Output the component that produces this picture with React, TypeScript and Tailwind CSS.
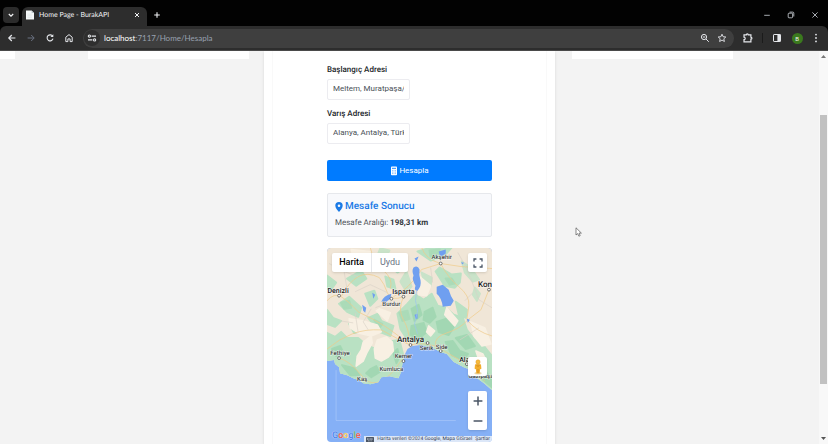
import { useState, type ReactNode } from 'react';
import { clsx } from 'clsx';

interface IconButtonProps {
  label: string;
  children: ReactNode;
  className?: string;
}

function IconButton({ label, children, className }: IconButtonProps) {
  return (
    <button
      type="button"
      aria-label={label}
      className={clsx('flex h-4 w-4 shrink-0 items-center justify-center', className)}
    >
      {children}
    </button>
  );
}

function TabStrip() {
  return (
    <div className="flex h-[26px] shrink-0 items-end bg-[#020202]">
      <IconButton label="Sekmelerde ara" className="mb-[3px] ml-[3px] rounded bg-[#2b2b2b] text-gray-100">
        <svg viewBox="0 0 8 8" className="h-2 w-2" fill="none" stroke="currentColor" strokeWidth="1.2">
          <path d="M1.8 3l2.2 2.2L6.2 3" />
        </svg>
      </IconButton>
      <div className="ml-[3px] flex h-[19px] w-[125px] items-center rounded-t-md bg-[#2d2d2d] pb-1 pr-0.5 pl-[3px]">
        <svg viewBox="0 0 10 10" className="h-2.5 w-2.5 shrink-0">
          <path d="M1 .5h5.6L9 3v6.5H1z" fill="#f4f7f8" />
          <path d="M6.6.5V3H9z" fill="#b9c4c8" />
          <path d="M2.4 4.2h4.4M2.4 5.8h4.4M2.4 7.4h4.4" stroke="#d2dadd" strokeWidth=".5" />
        </svg>
        <span className="ml-1 flex-1 font-['Lato',sans-serif] text-[7px] leading-3 whitespace-nowrap text-gray-100">
          Home Page - BurakAPI
        </span>
        <IconButton label="Sekmeyi kapat" className="text-gray-100">
          <svg viewBox="0 0 8 8" className="h-2 w-2" fill="none" stroke="currentColor" strokeWidth="1">
            <path d="M2 2l4 4M6 2L2 6" />
          </svg>
        </IconButton>
      </div>
      <IconButton label="Yeni sekme" className="mb-[3px] ml-0.5 text-gray-100">
        <svg viewBox="0 0 8 8" className="h-2 w-2" fill="none" stroke="currentColor" strokeWidth="1.1">
          <path d="M4 1.2v5.6M1.2 4h5.6" />
        </svg>
      </IconButton>
      <div className="mb-[3px] ml-auto flex gap-2 pr-[5px] text-gray-300">
        <IconButton label="Simge durumuna küçült">
          <svg viewBox="0 0 8 8" className="h-2 w-2" stroke="currentColor" strokeWidth=".8">
            <path d="M1.2 4.3h5.6" />
          </svg>
        </IconButton>
        <IconButton label="Önceki boyut">
          <svg viewBox="0 0 8 8" className="h-2 w-2" fill="none" stroke="currentColor" strokeWidth=".8">
            <rect x="1.2" y="2.2" width="4.4" height="4.6" rx=".8" />
            <path d="M2.6 1.1h3.2q1 0 1 1v3.4" />
          </svg>
        </IconButton>
        <IconButton label="Kapat">
          <svg viewBox="0 0 8 8" className="h-2 w-2" fill="none" stroke="currentColor" strokeWidth=".8">
            <path d="M1.4 1.4l5.2 5.2M6.6 1.4L1.4 6.6" />
          </svg>
        </IconButton>
      </div>
    </div>
  );
}

function Toolbar() {
  const [path, setPath] = useState(':7117/Home/Hesapla');

  return (
    <div className="bg-[#020202]">
      <div className="flex h-[25px] items-center rounded-t-md border-b border-[#4a4a4a] bg-[#2d2d2d] text-gray-200">
        <div className="flex gap-[3px] pl-1">
          <IconButton label="Geri">
            <svg viewBox="0 0 10 10" className="h-2.5 w-2.5" fill="none" stroke="currentColor" strokeWidth="1.2">
              <path d="M8.4 5H2M4.8 2L1.8 5l3 3" />
            </svg>
          </IconButton>
          <IconButton label="İleri" className="text-gray-500">
            <svg viewBox="0 0 10 10" className="h-2.5 w-2.5" fill="none" stroke="currentColor" strokeWidth="1">
              <path d="M1.6 5H8M5.2 2l3 3-3 3" />
            </svg>
          </IconButton>
          <IconButton label="Yenile">
            <svg viewBox="0 0 10 10" className="h-2.5 w-2.5" fill="none" stroke="currentColor" strokeWidth="1.1">
              <path d="M7.7 3.3A3 3 0 1 0 8 5.7" />
              <path d="M8.3 1.2v2.9H5.4z" fill="currentColor" stroke="none" />
            </svg>
          </IconButton>
          <IconButton label="Ana sayfa">
            <svg viewBox="0 0 10 10" className="h-2.5 w-2.5" fill="none" stroke="currentColor" strokeWidth="1">
              <path d="M1.8 4.2L5 1.6l3.2 2.6v4.4H6.1V5.9H3.9v2.7H1.8z" />
            </svg>
          </IconButton>
        </div>
        <div className="ml-1.5 flex h-[19px] min-w-0 flex-1 items-center rounded-full bg-[#3f3f3f] pr-1 pl-px">
          <IconButton label="Site bilgileri" className="rounded-full bg-[#2f2f2f]">
            <svg viewBox="0 0 10 10" className="h-2.5 w-2.5" fill="none" stroke="currentColor" strokeWidth="1.1">
              <path d="M4.6 3.1H9M1 6.9h4.4" />
              <circle cx="2.4" cy="3.1" r="1.1" />
              <circle cx="7.6" cy="6.9" r="1.1" />
            </svg>
          </IconButton>
          <label htmlFor="address" className="ml-1 font-['Lato',sans-serif] text-[8px] leading-3 text-white">
            localhost
          </label>
          <input
            id="address"
            value={path}
            onChange={(e) => setPath(e.target.value)}
            className="min-w-0 flex-1 bg-transparent font-['Lato',sans-serif] text-[8px] leading-3 text-gray-400 outline-none"
          />
          <IconButton label="Yakınlaştırma">
            <svg viewBox="0 0 10 10" className="h-2.5 w-2.5" fill="none" stroke="currentColor" strokeWidth="1">
              <circle cx="4" cy="4" r="2.6" />
              <path d="M6 6l2.8 2.8M2.8 4h2.4" />
            </svg>
          </IconButton>
          <IconButton label="Yer işareti ekle" className="ml-px">
            <svg viewBox="0 0 10 10" className="h-2.5 w-2.5" fill="none" stroke="currentColor" strokeWidth=".9">
              <path d="M5 1.2l1.1 2.5 2.7.3-2 1.8.6 2.7L5 7.1 2.6 8.5l.6-2.7-2-1.8 2.7-.3z" />
            </svg>
          </IconButton>
        </div>
        <div className="flex items-center pr-1 pl-1.5">
          <IconButton label="Uzantılar">
            <svg viewBox="0 0 10 10" className="h-2.5 w-2.5" fill="none" stroke="currentColor" strokeWidth="1.2">
              <path d="M1 1.9h2.3a1 1 0 0 1 2 0h2.6v2.3a1 1 0 0 1 0 2v2.6H1V6.6a1.2 1.2 0 0 0 0-2.4z" />
            </svg>
          </IconButton>
          <span className="mx-1.5 h-2.5 w-px bg-[#1b1b1b]" />
          <IconButton label="Yan panel">
            <svg viewBox="0 0 10 10" className="h-2.5 w-2.5">
              <rect x="1.5" y="1.5" width="7" height="7" rx=".6" fill="none" stroke="currentColor" />
              <path d="M5.4 1.5h3.1v7H5.4z" fill="currentColor" />
            </svg>
          </IconButton>
          <IconButton label="Profil" className="ml-1">
            <span className="flex h-[11px] w-[11px] items-center justify-center rounded-full bg-[#3b7a1e] text-[6px] text-gray-100">
              B
            </span>
          </IconButton>
          <IconButton label="Menü" className="ml-[3px]">
            <svg viewBox="0 0 10 10" className="h-2.5 w-2.5" fill="currentColor">
              <circle cx="5" cy="1.6" r=".9" />
              <circle cx="5" cy="5" r=".9" />
              <circle cx="5" cy="8.4" r=".9" />
            </svg>
          </IconButton>
        </div>
      </div>
    </div>
  );
}

const CITIES = [
  { name: 'Akşehir', x: 114, y: 12, size: 6, dot: [113, 16] },
  { name: 'Denizli', x: 11, y: 45, size: 7, dot: [12, 48] },
  { name: 'Isparta', x: 76, y: 46, size: 7, dot: [76, 49] },
  { name: 'Burdur', x: 64, y: 58, size: 6, dot: [64, 51] },
  { name: 'Kon', x: 157, y: 39, size: 8, dot: [161, 42] },
  { name: 'Antalya', x: 83, y: 94, size: 8, dot: [83, 97] },
  { name: 'Fethiye', x: 13, y: 107, size: 6, dot: [12, 110] },
  { name: 'Kemer', x: 76, y: 110, size: 6, dot: [76, 113] },
  { name: 'Serik', x: 99, y: 102, size: 6, dot: [100, 95] },
  { name: 'Side', x: 114, y: 101, size: 6, dot: [113, 103] },
  { name: 'Alanya', x: 142, y: 114, size: 7, dot: [139, 116] },
  { name: 'Kumluca', x: 64, y: 123, size: 6, dot: null },
  { name: 'Kaş', x: 35, y: 133, size: 6, dot: null },
  { name: 'Gazipaşa', x: 153, y: 130, size: 6, dot: null },
];

function MapDrawing() {
  return (
    <svg
      viewBox="0 0 164 194"
      preserveAspectRatio="xMidYMid slice"
      className="absolute inset-0 h-full w-full"
      role="img"
      aria-label="Antalya haritası"
    >
      <defs>
        <clipPath id="land">
          <path d="M0 0H164V142L156 135L148 129L144 122L136 119L126 114L119 106L113 104L103 99L93 97L85 98L80 101L77 107L75 115L74 123L71 130L62 128L54 129L51 134L43 136L36 135L32 132L26 130L20 127L13 125L12 119L8 116L7 112L0 113Z" />
        </clipPath>
      </defs>
      <rect width="164" height="194" fill="#85b0f6" />
      <g clipPath="url(#land)">
        <rect width="164" height="145" fill="#f0e6d8" />
        {/* forests */}
        <g fill="#b9e2c3" stroke="#b9e2c3" strokeWidth="2" strokeLinejoin="round">
          <path d="M80 56L88 47L96 52L104 46L110 58L118 60L126 67L135 70L139 82L146 91L156 98L164 108V145L140 122L126 116L112 104L95 97L80 92L73 81L70 66Z" />
          <path d="M0 85L8 89L14 84L20 90L31 90L39 97L48 101L52 109L60 104L65 93L72 92L76 108L75 132L50 137L32 135L11 124L0 115Z" />
          <path d="M12 56L22 49L34 60L31 69L20 64ZM0 62L6 70L14 73L8 79L0 76ZM41 70L50 66L54 73L66 78L63 88L52 84ZM20 31L34 23L39 31L29 38ZM59 16L69 10L77 20L70 25ZM90 4L104 0H124L116 9L103 13ZM108 24L112 20L124 27L133 26L132 35L127 40L117 38ZM58 29L66 32L68 41L60 39ZM128 54L139 62L138 70L131 67ZM0 28L9 35L4 42L0 41ZM22 76L31 77L34 83L27 85ZM38 46L47 43L50 51L43 58Z" />
          <path d="M134 14L143 20L151 32L145 34L137 25ZM79 24L84 39L79 44L73 34ZM94 25L104 30L103 38L97 35ZM53 1L62 3L59 9L51 6ZM147 40L152 46L149 53L145 47Z" opacity=".7" />
        </g>
        <g fill="#9bd5ad" stroke="#9bd5ad" strokeWidth="2" strokeLinejoin="round" opacity=".7">
          <path d="M84 61L91 57L94 67L87 73ZM97 64L105 60L108 69L102 75L96 72ZM109 74L118 71L126 79L121 87L111 84ZM84 78L96 75L99 84L91 91L83 87ZM128 90L139 87L147 98L138 101ZM118 94L125 93L132 103L140 106L135 112L124 107ZM5 101L13 98L17 106L9 108ZM43 121L49 118L52 124L44 129L39 125ZM66 105L70 101L72 109L69 115ZM15 117L27 120L32 127L23 127ZM145 116L156 121L164 132V139L151 128Z" />
          <path d="M14 55L22 53L24 60L17 61ZM61 18L68 14L70 21L65 22ZM102 3L112 2L109 9L103 9ZM118 31L124 31L127 36L122 37ZM72 65L80 63L82 71L75 73ZM47 72L55 76L52 80Z" opacity=".65" />
        </g>
        {/* bare highlands */}
        <g fill="#f8f0e3" stroke="#f8f0e3" strokeWidth="1.5" strokeLinejoin="round">
          <path d="M50 92L59 89L65 94L66 103L61 109L54 113L48 110L47 101ZM36 94L44 88L45 95L40 104L36 113L29 118L30 108L34 102ZM22 71L36 73L50 77L54 84L44 88L31 85L23 80ZM119 60L130 73L127 78L117 67ZM92 29L103 38L99 48L91 47ZM52 61L63 65L60 73L49 63ZM24 2L43 4L38 13L26 10ZM143 74L157 80L163 96L154 98L146 88ZM101 78L107 83L103 88L99 84ZM148 103L155 106L158 112L150 109Z" />
        </g>
        {/* roads */}
        <g fill="none" stroke="#f0c987" strokeWidth=".8" opacity=".85">
          <path d="M0 53Q7 45 14 49T31 64Q46 71 57 78T82 97" />
          <path d="M14 49Q22 34 31 29T52 30Q57 36 60 45T76 49Q70 62 76 72T82 97" />
          <path d="M43 0Q46 15 56 23T63 41M66 49Q81 42 94 22L113 16L133 19L164 21" />
          <path d="M94 0Q98 12 113 16Q120 30 131 39T141 58L139 72" />
          <path d="M82 97Q99 93 113 101T139 116L157 133" />
          <path d="M161 42L153 62L140 72Q132 81 119 85T108 98" />
          <path d="M0 101Q12 91 25 86T54 82L80 96M12 110Q23 113 35 128T65 124L75 111" />
          <path d="M139 72Q149 84 164 88" />
        </g>
        <g fill="none" stroke="#d9d0c6" strokeWidth=".6">
          <path d="M2 16L17 24L31 29M17 24L20 42M28 44L43 37L60 45M28 65L31 85M44 61L36 74L41 82M103 20L105 35M130 5L139 21L151 52L164 60M132 92L151 80M13 73L26 75M64 54L48 60M145 45L137 53" />
        </g>
        {/* lakes */}
        <g fill="#6f9ff0">
          <path d="M86 20Q90 17 92 22Q91 28 93 33Q94 39 90 43Q86 43 88 38Q84 32 86 28Q84 23 86 20Z" />
          <path d="M109 39L115 37L121 42Q123 49 126 53L123 58L115 59Q114 50 109 46Z" />
          <path d="M54 54Q56 48 64 46L63 51L59 54Z" />
          <path d="M111 4L118 2L118 6L114 9L112 8Z" />
          <path d="M35 57L39 60L38 65L36 63ZM87 67L90 66L90 71L88 71ZM139 71L142 72L140 75ZM45 45L48 47L46 51ZM133 15L136 15L135 17Z" />
          <path d="M87 11L91 9L89 14Z" />
        </g>
        <path d="M89 43L88 53L90 63L87 76L90 86" fill="none" stroke="#9cc4ee" strokeWidth=".7" />
      </g>
      <path d="M9 122V172H128" fill="none" stroke="#a9c8fa" strokeWidth=".7" />
      {CITIES.map((city) => (
        <g key={city.name}>
          {city.dot && (
            <circle cx={city.dot[0]} cy={city.dot[1]} r="1.4" fill="#fff" stroke="#555" strokeWidth=".8" />
          )}
          <text
            x={city.x}
            y={city.y}
            fontSize={city.size}
            fontWeight={500}
            textAnchor="middle"
            fill={city.size > 6 ? '#202124' : '#444'}
            stroke="#fff"
            strokeWidth="1"
            strokeOpacity=".7"
            paintOrder="stroke"
          >
            {city.name}
          </text>
        </g>
      ))}
    </svg>
  );
}

function RouteMap() {
  const [satellite, setSatellite] = useState(false);

  return (
    <div className="relative mt-[11px] h-[194px] overflow-hidden rounded">
      <MapDrawing />
      <div className="absolute top-[5px] left-[5px] flex h-[19px] rounded-xs bg-white text-[9px] shadow">
        <button
          type="button"
          onClick={() => setSatellite(false)}
          className={clsx('w-10 border-r border-gray-200', satellite ? 'text-gray-500' : 'font-medium text-black')}
        >
          Harita
        </button>
        <button
          type="button"
          onClick={() => setSatellite(true)}
          className={clsx('w-9', satellite ? 'font-medium text-black' : 'text-gray-500')}
        >
          Uydu
        </button>
      </div>
      <button
        type="button"
        aria-label="Tam ekran"
        className="absolute top-[5px] right-[5px] flex h-[19px] w-[19px] items-center justify-center rounded-xs bg-white text-gray-600 shadow"
      >
        <svg viewBox="0 0 10 10" className="h-2.5 w-2.5" fill="none" stroke="currentColor" strokeWidth="1.3">
          <path d="M1 3.4V1h2.4M6.6 1H9v2.4M9 6.6V9H6.6M3.4 9H1V6.6" />
        </svg>
      </button>
      <button
        type="button"
        aria-label="Sokak görünümü"
        className="absolute right-[5px] bottom-[66px] flex h-[19px] w-[19px] items-center justify-center rounded-xs bg-white shadow"
      >
        <svg viewBox="0 0 12 16" className="h-4 w-3">
          <ellipse cx="6" cy="14.2" rx="3.6" ry="1.2" fill="#e8d7a8" />
          <path d="M3 5.6Q6 4.2 9 5.6L9.4 9.8L8.1 10.2L7.7 14.4H4.3L3.9 10.2L2.6 9.8Z" fill="#f2ae2e" />
          <path d="M4.2 5.6L6 7.6L7.8 5.6M6 10V14" fill="none" stroke="#c97f14" strokeWidth=".7" />
          <circle cx="6" cy="3" r="2.2" fill="#f7bb3c" stroke="#d9921c" strokeWidth=".4" />
        </svg>
      </button>
      <div className="absolute right-[5px] bottom-3 flex w-[19px] flex-col rounded-xs bg-white text-gray-600 shadow">
        <button type="button" aria-label="Yakınlaştır" className="flex h-5 items-center justify-center">
          <svg viewBox="0 0 10 10" className="h-2.5 w-2.5" stroke="currentColor" strokeWidth="1.5">
            <path d="M5 .6v8.8M.6 5h8.8" />
          </svg>
        </button>
        <button type="button" aria-label="Uzaklaştır" className="flex h-[19px] items-center justify-center">
          <svg viewBox="0 0 10 10" className="h-2.5 w-2.5" stroke="currentColor" strokeWidth="1.5">
            <path d="M.6 5h8.8" />
          </svg>
        </button>
      </div>
      <div className="absolute bottom-px left-[5px] text-[9px] leading-[10px] font-medium [text-shadow:0_0_1px_white]">
        <span className="text-[#4a80ec]">G</span>
        <span className="text-[#ea5548]">o</span>
        <span className="text-[#f7c948]">o</span>
        <span className="text-[#4a80ec]">g</span>
        <span className="text-[#4fae68]">l</span>
        <span className="text-[#ea5548]">e</span>
      </div>
      <div className="absolute right-0 bottom-0 flex h-[6px] items-center gap-[3px] bg-[#dce7f8] px-0.5 text-[5px] leading-[6px] whitespace-nowrap text-gray-700">
        <svg viewBox="0 0 8 5" className="h-[5px] w-2">
          <rect width="8" height="5" rx=".6" fill="#4b5563" />
          <path d="M1 1.4h6M1 2.5h6M2 3.8h4" stroke="#dce7f8" strokeWidth=".5" strokeDasharray="1 .4" />
        </svg>
        <span>Harita verileri ©2024 Google, Mapa GISrael</span>
        <a href="#sartlar">Şartlar</a>
      </div>
    </div>
  );
}

interface AddressFieldProps {
  id: string;
  label: string;
  initial: string;
}

function AddressField({ id, label, initial }: AddressFieldProps) {
  const [value, setValue] = useState(initial);

  return (
    <div className="flex flex-col items-start gap-[3px]">
      <label htmlFor={id} className="text-[8px] leading-3 font-medium text-[#212529]">
        {label}
      </label>
      <input
        id={id}
        value={value}
        onChange={(e) => setValue(e.target.value)}
        className="h-[21px] w-[83px] rounded-xs border border-[#ececf0] bg-white px-[5px] pb-0.5 text-[8px] leading-3 text-[#495057] outline-none"
      />
    </div>
  );
}

function DistanceForm() {
  return (
    <div className="mx-auto w-full max-w-[165px] pt-[13px]">
      <form onSubmit={(e) => e.preventDefault()}>
        <div className="flex flex-col gap-2">
          <AddressField id="start" label="Başlangıç Adresi" initial="Meltem, Muratpaşa/Antalya" />
          <AddressField id="end" label="Varış Adresi" initial="Alanya, Antalya, Türkiye" />
        </div>
        <button
          type="submit"
          className="mt-4 flex h-[21px] w-full items-center justify-center gap-px rounded-xs bg-[#007bff] text-[8px] text-white"
        >
          <svg viewBox="0 0 8 10" className="h-2.5 w-2">
            <rect x="1" y=".6" width="6" height="8.6" rx=".8" fill="#fff" />
            <path d="M2 2.4h4" stroke="#4ba0ff" strokeWidth="1.3" />
            <path d="M2 4.6h4M2 6.1h4M2 7.6h4" stroke="#4ba0ff" strokeWidth=".8" strokeDasharray=".8 .8" />
          </svg>
          Hesapla
        </button>
      </form>
      <section className="mt-3 h-11 rounded-xs border border-[#e6e8ec] bg-[#f8f9fc] px-[7px] pt-1.5">
        <h2 className="flex items-center gap-0.5 text-[10px] leading-[14px] font-medium text-[#1a7ae6]">
          <svg viewBox="0 0 8 10" className="h-2.5 w-2" fill="currentColor">
            <path
              fillRule="evenodd"
              d="M4 0a3.7 3.7 0 0 1 3.7 3.7C7.7 6 5.2 8.7 4 10 2.8 8.7.3 6 .3 3.7A3.7 3.7 0 0 1 4 0zM4 2.4a1.3 1.3 0 1 0 0 2.6 1.3 1.3 0 0 0 0-2.6z"
            />
          </svg>
          Mesafe Sonucu
        </h2>
        <p className="mt-[3px] text-[8px] leading-3 text-[#50555a]">
          Mesafe Aralığı: <strong className="font-bold text-[#32373c]">198,31 km</strong>
        </p>
      </section>
      <RouteMap />
    </div>
  );
}

function Scrollbar() {
  return (
    <div className="flex w-[9px] shrink-0 flex-col items-center bg-[#f8f8f8] py-1" aria-hidden="true">
      <svg viewBox="0 0 5 3" className="h-[3px] w-[5px]">
        <path d="M0 3L2.5 0L5 3z" fill="#777" />
      </svg>
      <div className="flex-[57]" />
      <div className="w-[7px] flex-[269] bg-[#c1c1c1]" />
      <div className="flex-[53]" />
      <svg viewBox="0 0 5 3" className="h-[3px] w-[5px]">
        <path d="M0 0H5L2.5 3z" fill="#555" />
      </svg>
    </div>
  );
}

export default function App() {
  return (
    <div className="flex h-screen flex-col overflow-hidden bg-[#f3f3f3] font-['Roboto',sans-serif] [text-rendering:geometricPrecision]">
      <TabStrip />
      <Toolbar />
      <div className="flex min-h-0 flex-1">
        <div className="relative min-w-0 flex-1 overflow-hidden">
          <div className="absolute inset-x-0 top-0 flex h-2">
            <span className="w-[15px] bg-white" />
            <span className="ml-[73px] w-[161px] bg-white" />
            <span className="mr-[86px] ml-auto w-[161px] bg-white" />
          </div>
          <main className="relative mx-auto h-full w-full max-w-[291px] bg-white px-2 shadow">
            <div className="h-full border-x border-[#f9f9f9]">
              <DistanceForm />
            </div>
          </main>
          <svg viewBox="0 0 8 10" className="absolute top-[176px] left-[70.2%] h-2.5 w-2">
            <path
              d="M1 .8V8l1.7-1.4L3.9 9.2l1.3-.6L4 6.1h2.4z"
              fill="#fff"
              stroke="#555"
              strokeWidth=".7"
            />
          </svg>
        </div>
        <Scrollbar />
      </div>
    </div>
  );
}
